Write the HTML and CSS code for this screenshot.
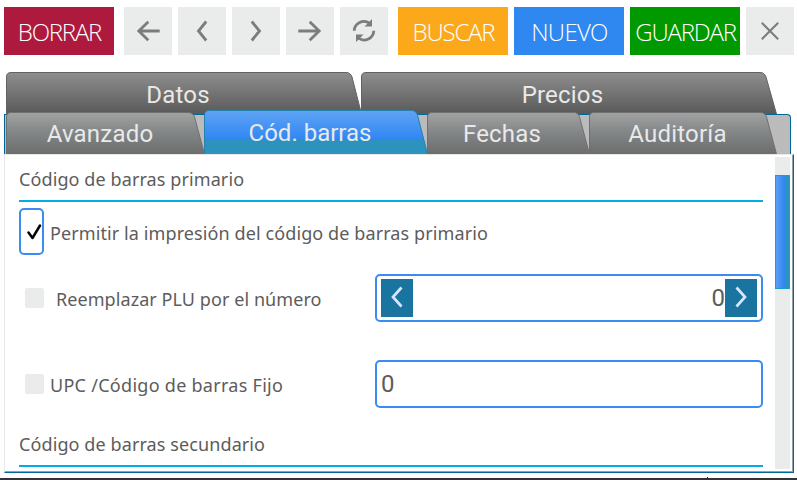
FILE: index.html
```html
<!DOCTYPE html>
<html lang="es">
<head>
<meta charset="utf-8">
<title>Artículo</title>
<link rel="stylesheet" href="styles.css">
</head>
<body>
<svg class="defs" width="0" height="0" aria-hidden="true">
  <defs>
    <linearGradient id="g-back" x1="0" y1="0" x2="0" y2="1"><stop offset="0" stop-color="#8e8e8e"/><stop offset="1" stop-color="#595959"/></linearGradient>
    <linearGradient id="g-front" x1="0" y1="0" x2="0" y2="1"><stop offset="0" stop-color="#a2a2a2"/><stop offset=".5" stop-color="#818586"/><stop offset="1" stop-color="#6d6d6d"/></linearGradient>
    <linearGradient id="g-active" x1="0" y1="0" x2="0" y2="1"><stop offset="0" stop-color="#5fa4f4"/><stop offset=".67" stop-color="#2f86f2"/><stop offset=".67" stop-color="#2b93bd"/><stop offset="1" stop-color="#2b93bd"/></linearGradient>
  </defs>
</svg>
<div class="toolbar">
  <button class="btn red"><span class="t-borrar">BORRAR</span></button>
  <div class="nav">
    <button class="icon"><svg width="48" height="48"><path d="M35.700 24H15M24.300 14.700 14.800 24l9.500 9.300"/></svg></button>
    <button class="icon"><svg width="48" height="48"><path d="M28.200 14.500 20.500 24l7.700 9.500"/></svg></button>
    <button class="icon"><svg width="48" height="48"><path d="M19.800 14.500 27.500 24l-7.700 9.500"/></svg></button>
    <button class="icon"><svg width="48" height="48"><path d="M12.300 24H33.500M23.700 14.700l9.500 9.300-9.500 9.300"/></svg></button>
    <button class="icon"><svg width="48" height="48"><path d="M14.200 23.700A9.700 9.700 0 0 1 29.500 16.200M33.800 23.700A9.700 9.700 0 0 1 18.500 31.200"/><path class="solid" d="M32 12v7.500h-7.500zM16 35v-7.500h7.500z"/></svg></button>
  </div>
  <div class="actions">
    <button class="btn orange"><span class="t-buscar">BUSCAR</span></button>
    <button class="btn blue"><span class="t-nuevo">NUEVO</span></button>
    <button class="btn green"><span class="t-guardar">GUARDAR</span></button>
    <button class="icon"><svg width="48" height="48"><path class="thin" d="m15.800 15.800 16.400 16.400M32.200 15.800 15.800 32.200"/></svg></button>
  </div>
</div>

<div class="tabs">
  <div class="row back">
    <div class="tab datos"><svg width="355" height="42"><path fill="url(#g-back)" stroke="#626262" d="M.5 42V5Q.5.500 5 .500H340Q344.500.500 346 5L354.500 38V42"/></svg><span>Datos</span></div>
    <div class="tab precios"><svg width="416" height="42"><path fill="url(#g-back)" stroke="#626262" d="M.5 42V5Q.5.500 5 .500H399Q403.500.500 405 5L415.500 42"/></svg><span>Precios</span></div>
  </div>
  <div class="strip">
    <div class="tab avanzado"><svg width="199" height="42"><path fill="url(#g-front)" stroke="#707070" d="M.5 42V5Q.5.500 5 .500H182Q187 .500 188.500 5L198.500 42"/></svg><span>Avanzado</span></div>
    <div class="tab active"><svg width="224" height="44"><path fill="url(#g-active)" stroke="#2681ad" d="M.5 44V5Q.5.500 5 .500H207Q212 .500 213.500 5L223.500 44"/></svg><span>Cód. barras</span></div>
    <div class="tab fechas"><svg width="163" height="42"><path fill="url(#g-front)" stroke="#707070" d="M.5 42V5Q.5.500 5 .500H147Q151 .500 152.500 5L162.500 42"/></svg><span>Fechas</span></div>
    <div class="tab auditoria"><svg width="188" height="42"><path fill="url(#g-front)" stroke="#707070" d="M.5 42V5Q.5.500 5 .500H171Q176 .500 177.500 5L187.500 42"/></svg><span>Auditoría</span></div>
  </div>
</div>

<div class="panel">
  <div class="form">
    <h2><span class="l-prim">Código de barras primario</span></h2>
    <label class="field check-row"><span class="focus"><svg width="15" height="17"><path d="M1.500 8.500 5.500 14 13 1.500"/></svg></span><span class="l-perm">Permitir la impresión del código de barras primario</span></label>
    <div class="field first">
      <label><i class="box"></i><span class="l-plu">Reemplazar PLU por el número</span></label>
      <div class="input spin">
        <button><svg width="32" height="38"><path d="m20.500 8.500-8.500 9.500 8.500 9.500"/></svg></button>
        <span class="value">0</span>
        <button><svg width="32" height="38"><path d="m11.500 8.500 8.500 9.500-8.500 9.500"/></svg></button>
      </div>
    </div>
    <div class="field second">
      <label><i class="box"></i><span class="l-upc">UPC /Código de barras Fijo</span></label>
      <div class="input"><span class="value">0</span></div>
    </div>
    <h2 class="last"><span class="l-sec">Código de barras secundario</span></h2>
  </div>
  <div class="scroll"><div class="thumb"></div></div>
</div>
<div class="bottom"><i class="tick"></i></div>
</body>
</html>
```
FILE: styles.css
```css
* { box-sizing: border-box; }
body { margin: 0; width: 797px; height: 480px; overflow: hidden; background: #fff; color: #5c5c5c; display: flex; flex-direction: column; }
.defs { position: absolute; }
button { border: 0; padding: 0; margin: 0; background: none; display: block; }
svg { display: block; fill: none; }
span { white-space: nowrap; }

.toolbar { display: flex; gap: 10px; padding: 7px 0 0 4px; height: 72px; flex: none; }
.nav, .actions { display: flex; gap: 6px; }
.btn { width: 110px; height: 48px; display: flex; align-items: center; justify-content: center; color: #fff; font: 300 24px/34px "Open Sans", sans-serif; letter-spacing: -1.2px; padding: 1px 0 0 1px; }
.t-nuevo { letter-spacing: -.7px; }
.red { background: #ad1a3d; }
.orange { background: #fba91a; }
.blue { background: #2f87f0; }
.green { background: #009900; }
.icon { width: 48px; height: 48px; background: #eaeceb; }
.icon path { stroke: #7c7c7c; stroke-width: 2.8; }
.icon .thin { stroke-width: 2; }
.icon .solid { stroke: none; fill: #7c7c7c; }

.tabs { height: 82px; flex: none; }
.row { display: flex; padding-left: 6px; height: 42px; }
.tab { position: relative; height: 42px; display: flex; justify-content: center; align-items: center; color: #e9e9e9; font: 24px/30px Roboto, sans-serif; letter-spacing: .2px; }
.tab svg { position: absolute; left: 0; top: 0; }
.tab span { position: relative; }
.datos { width: 355px; padding: 3px 11px 0 0; }
.precios { width: 416px; padding: 3px 13px 0 0; }
.strip { display: flex; align-items: flex-end; margin-left: 4px; width: 787px; height: 40px; border: 1px solid #006898; border-bottom: 0; border-radius: 0 4px 0 0; background: #bbb; padding-left: 1px; }
.avanzado { width: 199px; padding: 2px 11px 0 0; }
.active { width: 224px; height: 44px; margin-left: -1px; padding: 1px 12px 0 0; z-index: 1; letter-spacing: 0; }
.fechas { width: 163px; margin-left: -1px; padding: 2px 13px 0 0; }
.auditoria { width: 188px; margin-left: -1px; padding: 2px 11px 0 0; }

.panel { width: 790px; height: 319px; margin-left: 4px; flex: none; display: flex; border-style: solid; border-width: 1px 1px 1px 1px; border-color: #e8e8e8 #006898 #006898 #e8e8e8; box-shadow: inset -1px -1px #8fa3ad; background: #fff; }
.form { width: 770px; padding-left: 14px; font: 18px/26px "Noto Sans", sans-serif; }
h2 { margin: 0; font: inherit; width: 744px; height: 47px; padding-top: 11px; border-bottom: 2px solid #00ade5; }
.field { display: flex; }
.check-row { height: 54px; padding-top: 6px; gap: 6px; }
.check-row > span:last-child { padding-top: 12px; }
.focus { width: 25px; height: 47px; border: 2px solid #3b8cf2; border-radius: 5px; padding: 14px 0 0 6px; }
.focus path { stroke: #050505; stroke-width: 2.500; stroke-linecap: round; stroke-linejoin: round; }
.first { height: 86px; padding-top: 18px; }
.second { height: 86px; padding-top: 18px; }
.field > label { display: flex; width: 356px; padding: 12px 0 0 6px; }
.box { width: 19px; height: 20px; margin-top: 2px; background: #eaeceb; border-radius: 2px; }
.l-prim, .l-perm, .l-sec { letter-spacing: .1px; }
.l-plu { margin-left: 12px; letter-spacing: .07px; }
.l-upc { margin-left: 6px; letter-spacing: .28px; }
.input { width: 388px; height: 48px; display: flex; border: 2px solid #3b8cf2; border-radius: 5px; padding: 3px 4px; font: 24px/38px Roboto, sans-serif; }
.spin { justify-content: flex-end; }
.spin button { width: 32px; height: 38px; background: #1a74a0; }
.spin button:first-child { margin-right: auto; }
.spin path { stroke: #d6e7ff; stroke-width: 2.700; }
.last { height: 39px; padding-top: 3px; }
.scroll { width: 15px; height: 312px; margin-top: 2px; padding-top: 18px; background: #eaeceb; }
.thumb { height: 114px; border: 1px solid #1c9bd7; background: linear-gradient(90deg, #5a9ff2, #2f86f2 66%, #2b93bd 66%); }
.bottom { margin-top: auto; height: 3px; border-bottom: 2px solid #343232; }
.tick { display: block; width: 1px; height: 1px; margin-left: 707px; background: #111; }
```
